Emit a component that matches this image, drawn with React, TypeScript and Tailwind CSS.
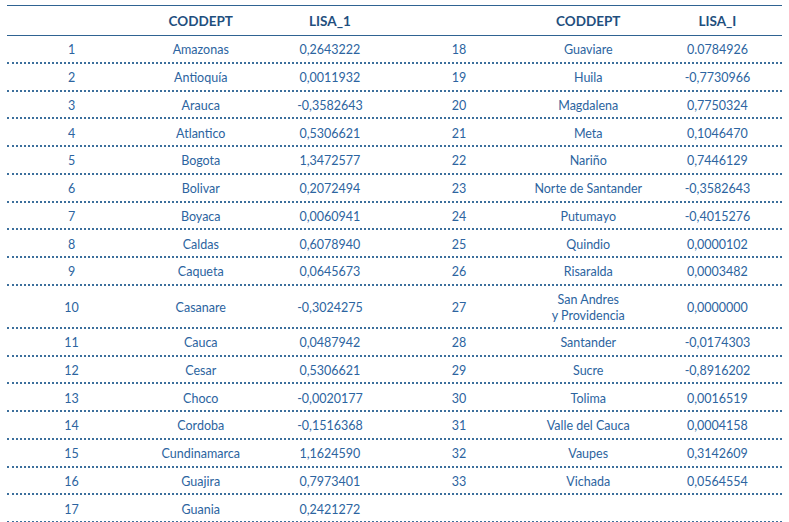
import React from 'react';

type Row = [string, string, string, string, React.ReactNode, string];

const ROWS: Row[] = [
  ['1', 'Amazonas', '0,2643222', '18', 'Guaviare', '0.0784926'],
  ['2', 'Antioquía', '0,0011932', '19', 'Huila', '-0,7730966'],
  ['3', 'Arauca', '-0,3582643', '20', 'Magdalena', '0,7750324'],
  ['4', 'Atlantico', '0,5306621', '21', 'Meta', '0,1046470'],
  ['5', 'Bogota', '1,3472577', '22', 'Nariño', '0,7446129'],
  ['6', 'Bolivar', '0,2072494', '23', 'Norte de Santander', '-0,3582643'],
  ['7', 'Boyaca', '0,0060941', '24', 'Putumayo', '-0,4015276'],
  ['8', 'Caldas', '0,6078940', '25', 'Quindio', '0,0000102'],
  ['9', 'Caqueta', '0,0645673', '26', 'Risaralda', '0,0003482'],
  ['10', 'Casanare', '-0,3024275', '27', <>San Andres<br />y Providencia</>, '0,0000000'],
  ['11', 'Cauca', '0,0487942', '28', 'Santander', '-0,0174303'],
  ['12', 'Cesar', '0,5306621', '29', 'Sucre', '-0,8916202'],
  ['13', 'Choco', '-0,0020177', '30', 'Tolima', '0,0016519'],
  ['14', 'Cordoba', '-0,1516368', '31', 'Valle del Cauca', '0,0004158'],
  ['15', 'Cundinamarca', '1,1624590', '32', 'Vaupes', '0,3142609'],
  ['16', 'Guajira', '0,7973401', '33', 'Vichada', '0,0564554'],
  ['17', 'Guania', '0,2421272', '', '', ''],
];

export default function App() {
  return (
    <div className="w-[789px] h-[522px] overflow-hidden bg-white pt-[5px] px-[7px] font-['Lato',sans-serif]">
      <div className="w-[775px]">
        {/* header */}
        <div className="grid grid-cols-6 h-[31px] pt-[2px] items-center border-y border-[#2f6392] text-[13.5px] font-bold text-[#1f4f7e]">
          <div />
          <div className="text-center">CODDEPT</div>
          <div className="text-center">LISA_1</div>
          <div />
          <div className="text-center">CODDEPT</div>
          <div className="text-center">LISA_I</div>
        </div>

        {ROWS.map((r, i) => (
          <div
            key={i}
            className={
              'grid grid-cols-6 items-center box-border pt-[3px] border-b-2 border-dotted border-[#3c6f9c] text-[12.5px] leading-4 text-[#2c64a0] ' +
              (r[0] === '10' ? 'h-[43px]' : 'h-[27.75px]')
            }
          >
            {r.map((c, j) => (
              <div key={j} className="text-center">
                {c}
              </div>
            ))}
          </div>
        ))}
      </div>
    </div>
  );
}
